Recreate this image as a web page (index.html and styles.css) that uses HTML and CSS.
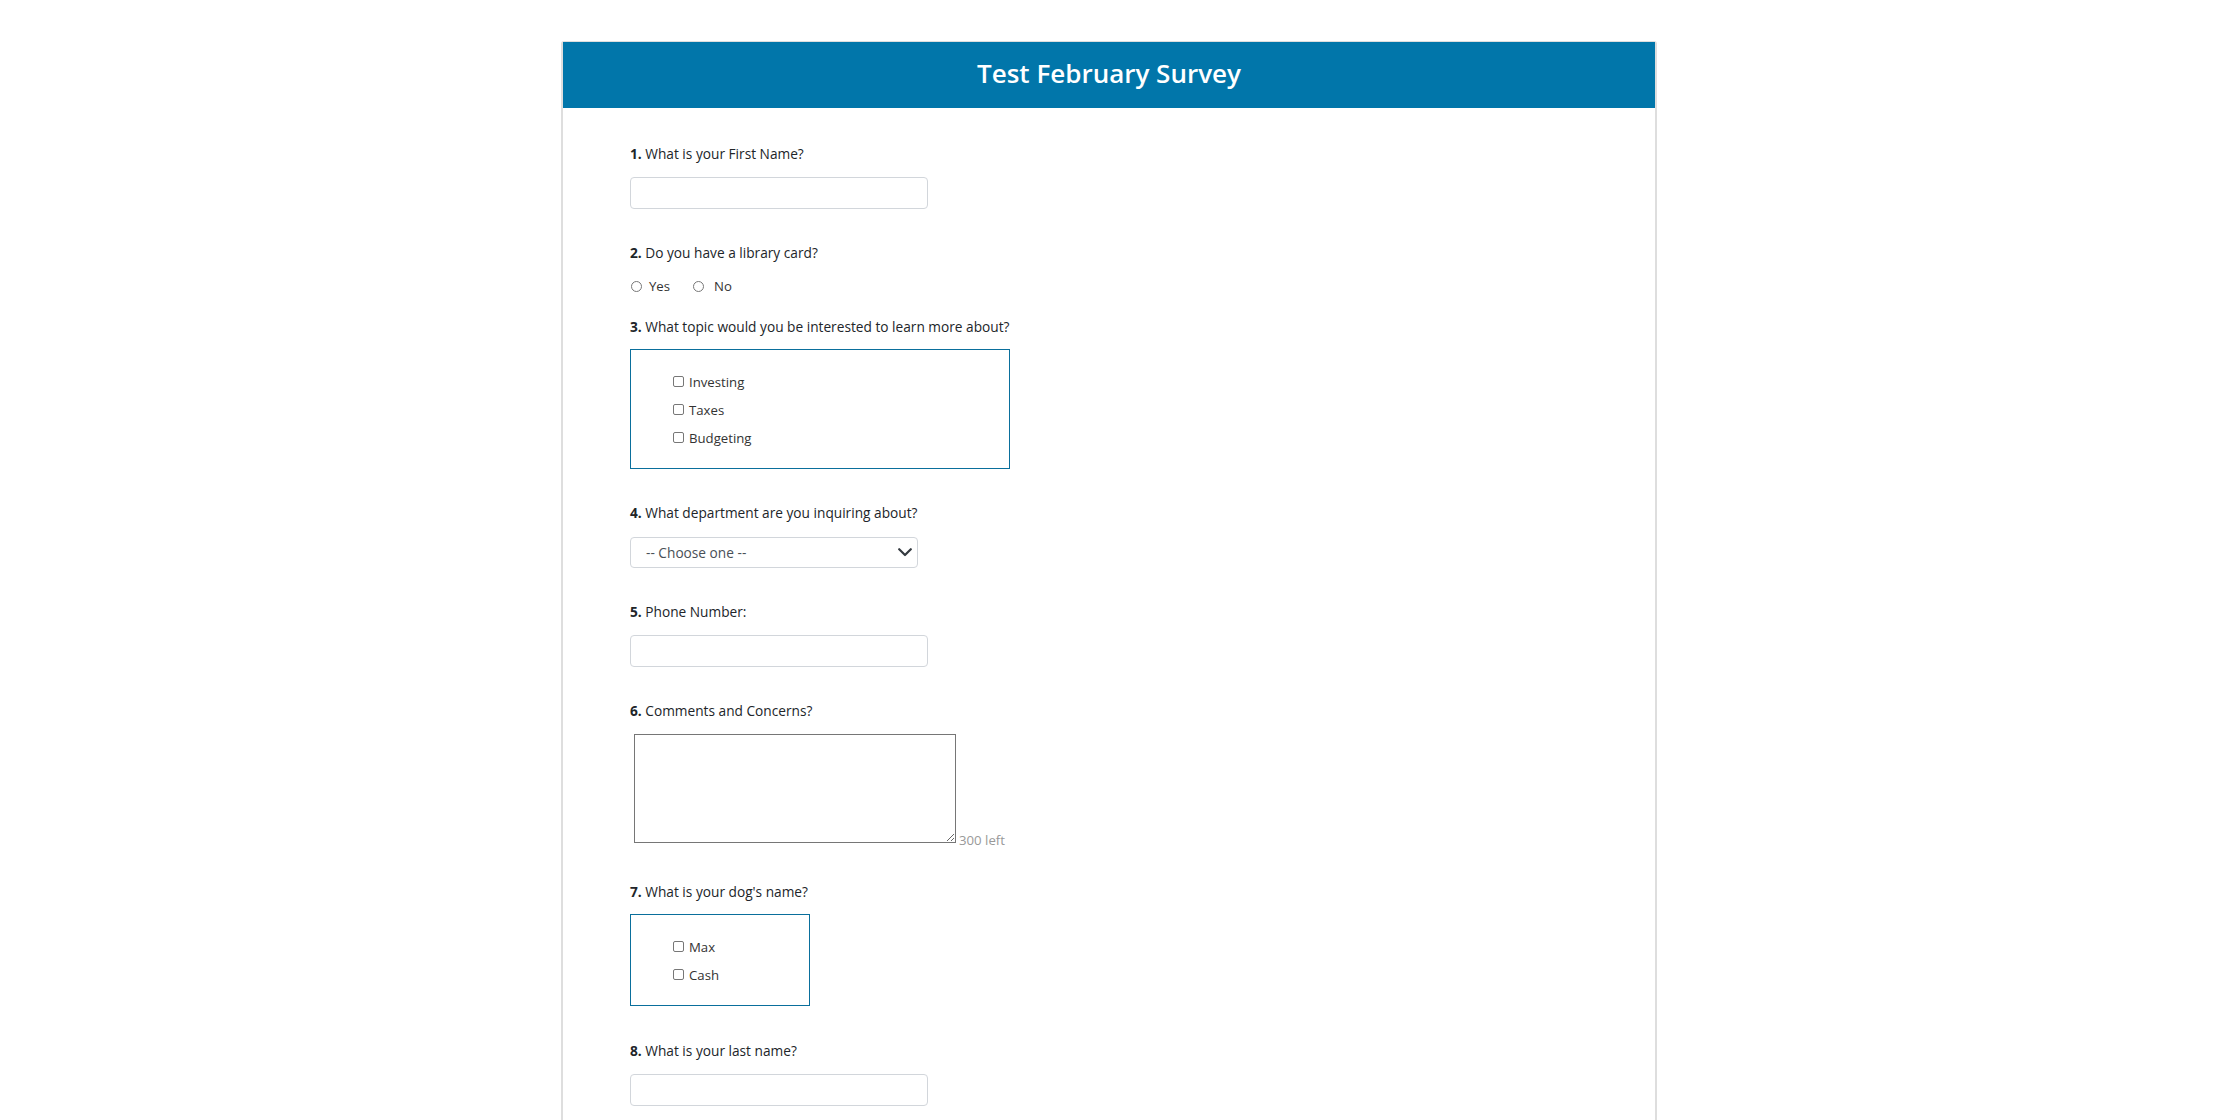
FILE: index.html
```html
<!DOCTYPE html>
<html lang="en">
<head>
<meta charset="utf-8">
<title>Test February Survey</title>
<link rel="stylesheet" href="styles.css">
</head>
<body>
<div class="page">
  <div class="card">
    <div class="header"><h1 class="title">Test February Survey</h1></div>
    <form class="body">
      <div class="q q-text">
        <div class="q-label"><b>1.</b> What is your First Name?</div>
        <input class="field" type="text">
      </div>
      <div class="q q-radio">
        <div class="q-label"><b>2.</b> Do you have a library card?</div>
        <div class="radios">
          <label class="radio-opt"><span class="radio"></span><span class="opt-text">Yes</span></label>
          <label class="radio-opt radio-no"><span class="radio"></span><span class="opt-text">No</span></label>
        </div>
      </div>
      <div class="q q-check">
        <div class="q-label"><b>3.</b> What topic would you be interested to learn more about?</div>
        <div class="check-box wide">
          <label class="check-opt"><span class="check"></span>Investing</label>
          <label class="check-opt"><span class="check"></span>Taxes</label>
          <label class="check-opt"><span class="check"></span>Budgeting</label>
        </div>
      </div>
      <div class="q q-select">
        <div class="q-label"><b>4.</b> What department are you inquiring about?</div>
        <div class="select">
          <span class="select-text">-- Choose one --</span>
          <svg class="chev" width="14" height="9" viewBox="0 0 14 9"><polyline points="1.2,1.2 7,7 12.8,1.2" fill="none" stroke="#343a40" stroke-width="2.2" stroke-linecap="round" stroke-linejoin="round"/></svg>
        </div>
      </div>
      <div class="q q-text">
        <div class="q-label"><b>5.</b> Phone Number:</div>
        <input class="field" type="text">
      </div>
      <div class="q q-area">
        <div class="q-label"><b>6.</b> Comments and Concerns?</div>
        <div class="area-row">
          <textarea class="area"></textarea>
          <span class="left">300 left</span>
        </div>
      </div>
      <div class="q q-check q-dog">
        <div class="q-label"><b>7.</b> What is your dog's name?</div>
        <div class="check-box narrow">
          <label class="check-opt"><span class="check"></span>Max</label>
          <label class="check-opt"><span class="check"></span>Cash</label>
        </div>
      </div>
      <div class="q q-text">
        <div class="q-label"><b>8.</b> What is your last name?</div>
        <input class="field" type="text">
      </div>
    </form>
  </div>
</div>
</body>
</html>
```
FILE: styles.css
```css
* { box-sizing: border-box; }
html, body { margin: 0; padding: 0; background: #fff; }
body {
  font-family: "Open Sans", "Noto Sans", "Liberation Sans", sans-serif;
  color: #212529;
  overflow: hidden;
  height: 1120px;
}
.page {
  padding-top: 41px;
  padding-right: 4px;
}
.card {
  width: 1096px;
  margin: 0 auto;
  border: 2px solid #dedede;
  border-top-width: 1px;
  border-radius: 3px;
  border-bottom: none;
  min-height: 1100px;
}
.header {
  height: 66px;
  background: #0176aa;
  padding-top: 12px;
  text-align: center;
}
.title {
  margin: 0;
  font-size: 26px;
  line-height: 38px;
  font-weight: 600;
  color: #fff;
}
.body {
  padding: 37px 0 0 67px;
}
.q-label {
  font-size: 13.7px;
  line-height: 18px;
  font-weight: 500;
  color: #212529;
}
.q-label b { font-weight: 700; }
.q { margin-bottom: 35px; }
.q-text .q-label { margin-bottom: 14px; }
.q-radio .q-label, .q-select .q-label { margin-bottom: 15px; }
.q-check .q-label { margin-bottom: 13px; }
.field {
  display: block;
  width: 298px;
  height: 32px;
  border: 1px solid #d2d6db;
  border-radius: 4px;
  background: #fff;
  margin: 0;
}
.q-radio { margin-bottom: 23px; }
.radios {
  display: flex;
  height: 18px;
  align-items: center;
  padding-left: 1px;
}
.radio-opt {
  display: flex;
  align-items: center;
  font-size: 13.2px;
  color: #333;
}
.radio {
  width: 11px;
  height: 11px;
  border: 1px solid #777;
  border-radius: 50%;
  margin-right: 7px;
}
.radio-opt + .radio-opt { margin-left: 23px; }
.radio-no .radio { margin-right: 10px; }
.check-box {
  border: 1px solid #0a6f9c;
  padding: 22px 0 20px 42px;
}
.check-box.wide { width: 380px; }
.check-box.narrow { width: 180px; }
.check-opt {
  display: flex;
  align-items: center;
  height: 20px;
  font-size: 13.2px;
  color: #333;
}
.check-opt + .check-opt { margin-top: 8px; }
.check {
  width: 11px;
  height: 11px;
  border: 1px solid #777;
  border-radius: 2px;
  margin-right: 5px;
  margin-top: -1px;
  flex: none;
}
.select {
  width: 288px;
  height: 31px;
  border: 1px solid #d2d6db;
  border-radius: 4px;
  display: flex;
  align-items: center;
  justify-content: space-between;
  padding: 0 5px 0 15px;
}
.select-text {
  font-size: 13.7px;
  color: #495057;
}
.chev { display: block; margin-top: -1px; }
.q-area .q-label { margin-bottom: 14px; }
.q-area { margin-bottom: 40px; }
.q-dog { margin-bottom: 36px; }
.area-row {
  display: flex;
  align-items: flex-end;
  padding-left: 4px;
}
.area {
  display: block;
  width: 322px;
  height: 109px;
  border: 1px solid #767676;
  margin: 0;
  padding: 2px;
  font-family: inherit;
}
.left {
  font-size: 13.2px;
  line-height: 14px;
  color: #999;
  margin-left: 3px;
  margin-bottom: -4px;
}
```
